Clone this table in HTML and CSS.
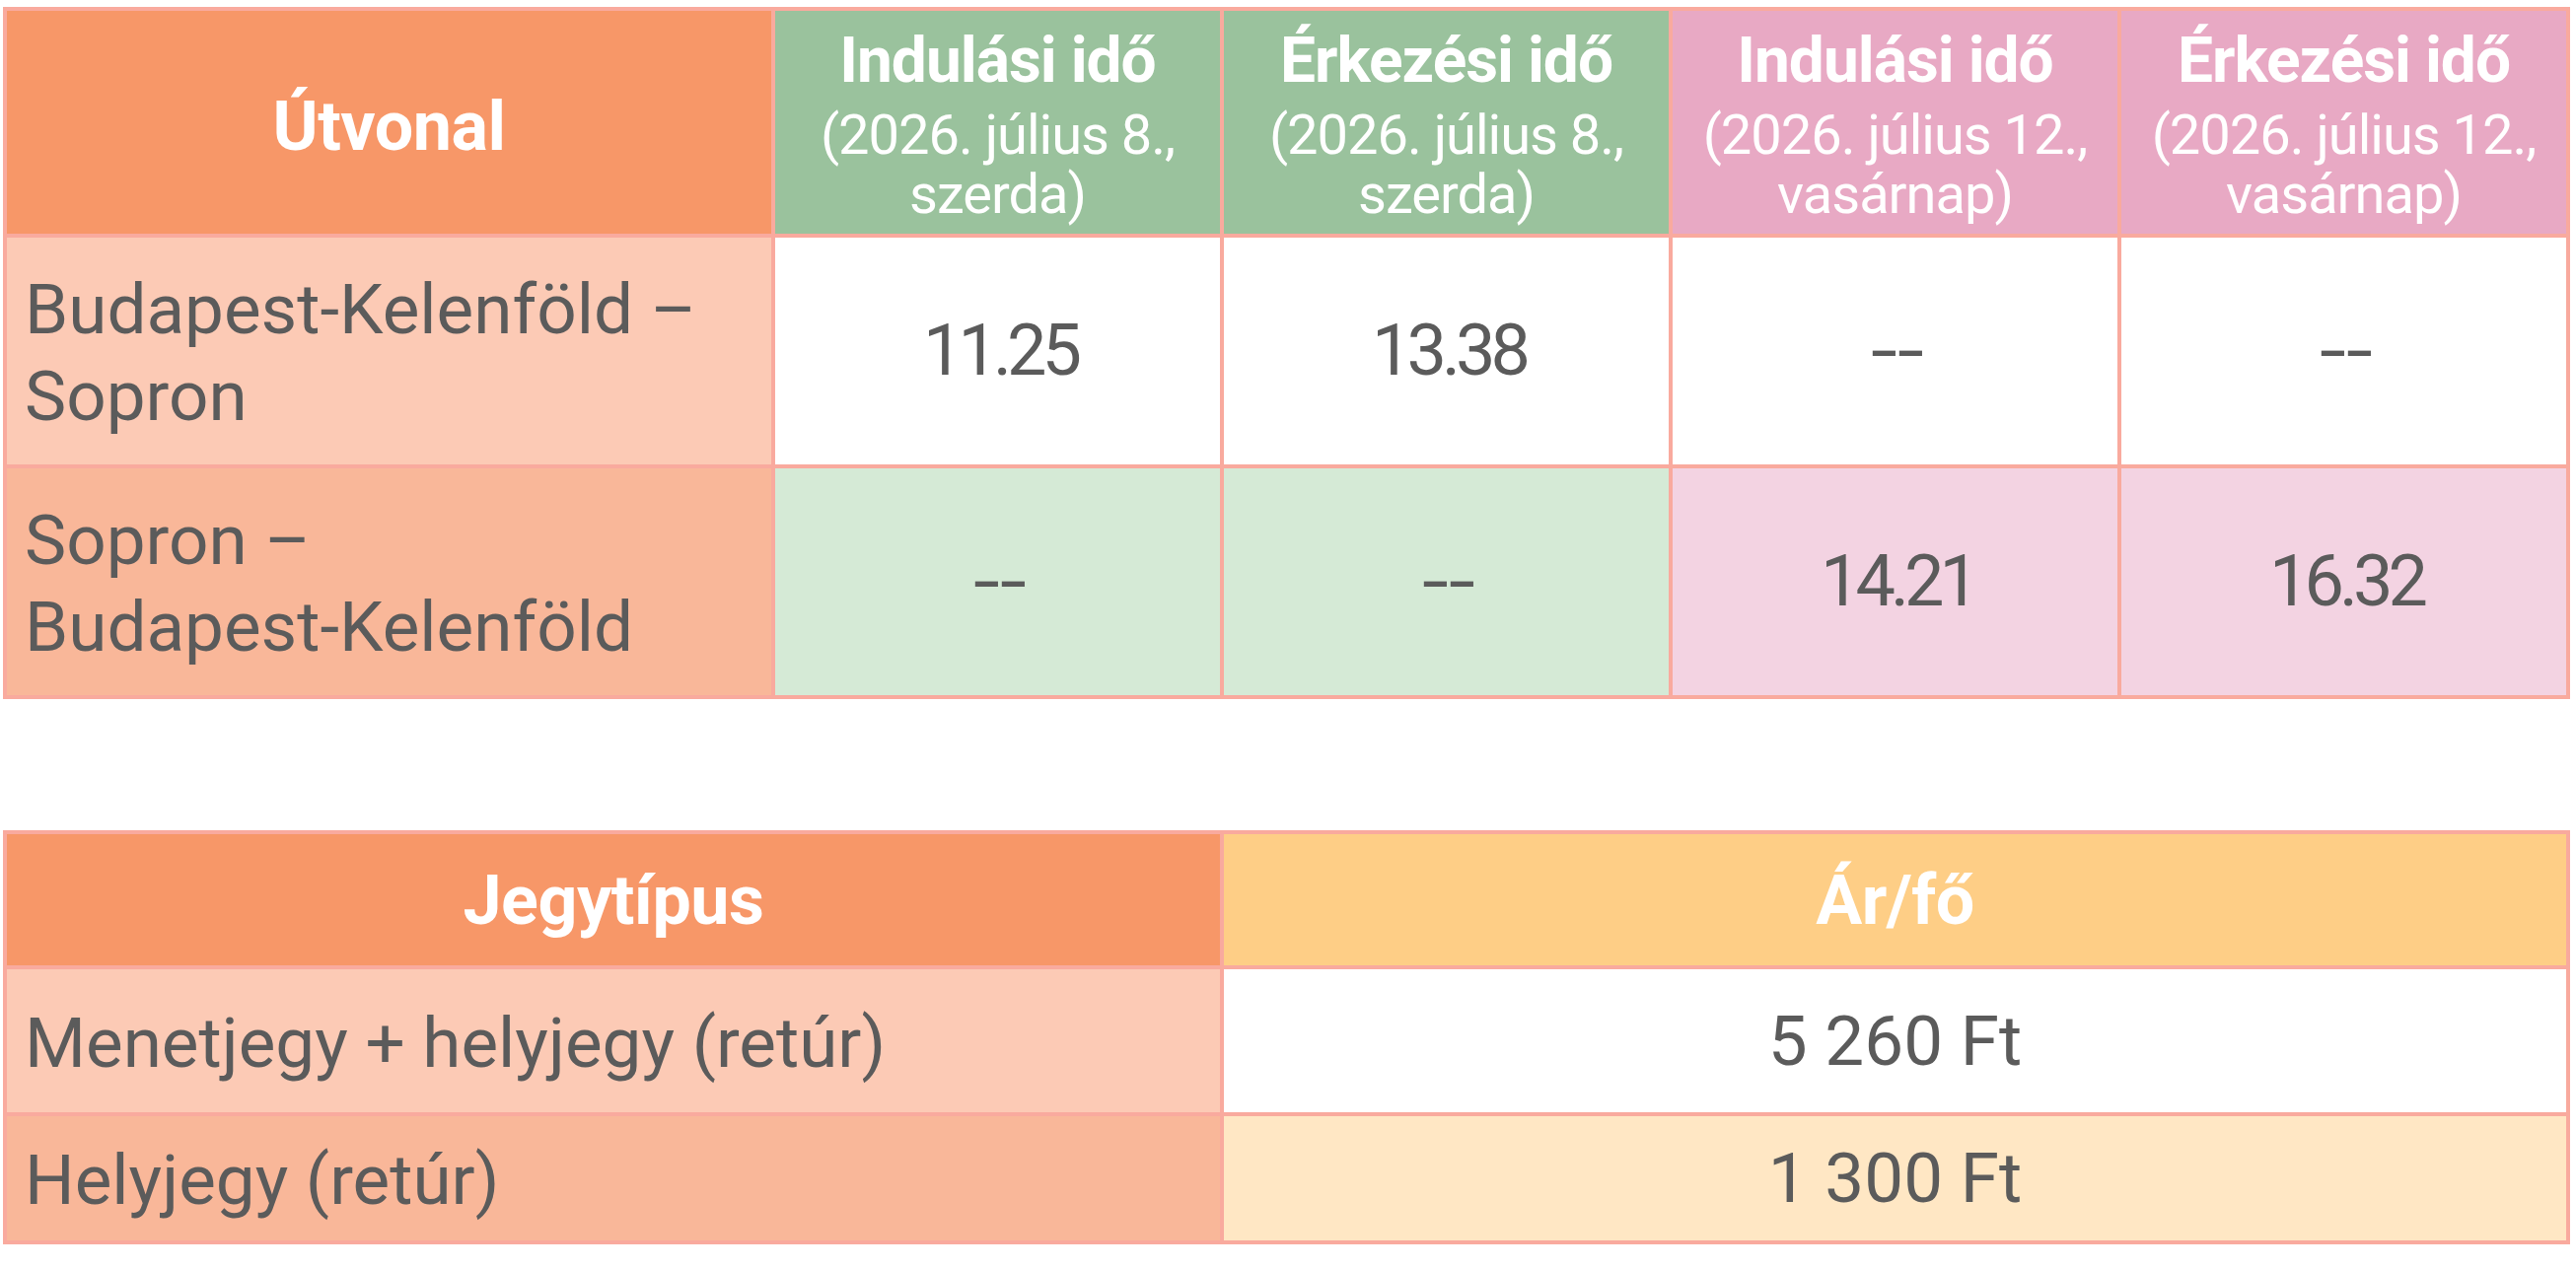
FILE: index.html
```html
<!DOCTYPE html>
<html lang="hu">
<head>
<meta charset="utf-8">
<title>Menetrend és jegyárak</title>
<link rel="stylesheet" href="styles.css">
</head>
<body>
<div class="page">
  <div class="grid sched">
    <div class="cell head big orange route-head">Útvonal</div>
    <div class="cell head green">
      <div class="head-inner"><span class="h-title">Indulási idő</span><span class="h-sub">(2026. július 8., szerda)</span></div>
    </div>
    <div class="cell head green">
      <div class="head-inner"><span class="h-title">Érkezési idő</span><span class="h-sub">(2026. július 8., szerda)</span></div>
    </div>
    <div class="cell head pink">
      <div class="head-inner"><span class="h-title">Indulási idő</span><span class="h-sub">(2026. július 12., vasárnap)</span></div>
    </div>
    <div class="cell head pink">
      <div class="head-inner"><span class="h-title">Érkezési idő</span><span class="h-sub">(2026. július 12., vasárnap)</span></div>
    </div>

    <div class="cell label peach"><div class="label-text">Budapest-Kelenföld – Sopron</div></div>
    <div class="cell time white">11.25</div>
    <div class="cell time white">13.38</div>
    <div class="cell time white"><span class="dash">--</span></div>
    <div class="cell time white"><span class="dash">--</span></div>

    <div class="cell label salmon"><div class="label-text">Sopron – <span class="nowrap">Budapest-Kelenföld</span></div></div>
    <div class="cell time lightgreen"><span class="dash">--</span></div>
    <div class="cell time lightgreen"><span class="dash">--</span></div>
    <div class="cell time lightpink">14.21</div>
    <div class="cell time lightpink">16.32</div>
  </div>

  <div class="grid prices">
    <div class="cell head big orange">Jegytípus</div>
    <div class="cell head big yellow">Ár/fő</div>

    <div class="cell label peach"><div class="label-text">Menetjegy + helyjegy (retúr)</div></div>
    <div class="cell price white">5 260 Ft</div>

    <div class="cell label salmon"><div class="label-text">Helyjegy (retúr)</div></div>
    <div class="cell price lightyellow">1 300 Ft</div>
  </div>
</div>
</body>
</html>
```

FILE: styles.css
```css
html, body {
  margin: 0;
  padding: 0;
  background: #ffffff;
}

body {
  font-family: Roboto, "Noto Sans", "Liberation Sans", sans-serif;
  color: #5b5b5b;
}

.page {
  display: flex;
  flex-direction: column;
  gap: 133px;
  padding: 7px 6px 0 3px;
}

.grid {
  display: grid;
  background: #f9aa9e;
  padding: 4px;
  gap: 4px;
}

.sched {
  grid-template-columns: 775px repeat(4, 1fr);
  grid-template-rows: 226px 230px 230px;
}

.prices {
  grid-template-columns: 1230px 1fr;
  grid-template-rows: 133px 145px 126px;
}

.cell {
  display: flex;
  align-items: center;
  justify-content: center;
  text-align: center;
  min-width: 0;
}

/* colours */
.orange { background: #f79768; }
.green { background: #9ac29d; }
.pink { background: #e8a9c4; }
.yellow { background: #fece86; }
.peach { background: #fccab5; }
.salmon { background: #f9b799; }
.white { background: #ffffff; }
.lightgreen { background: #d5ead6; }
.lightpink { background: #f3d3e2; }
.lightyellow { background: #ffe7c4; }

/* header cells */
.head {
  color: #ffffff;
  font-weight: 700;
  font-size: 64px;
  letter-spacing: -1px;
  line-height: 72px;
}

.head.big {
  font-size: 70px;
  letter-spacing: -0.5px;
}

.route-head {
  padding-top: 8px;
}

.head-inner {
  display: flex;
  flex-direction: column;
  align-items: center;
  padding: 0 10px 6px;
}

.h-title {
  display: block;
  line-height: 91px;
}

.h-sub {
  display: block;
  font-weight: 400;
  font-size: 56px;
  letter-spacing: -1px;
  line-height: 60px;
}

/* body cells */
.label {
  justify-content: flex-start;
  text-align: left;
  font-size: 71px;
  line-height: 88px;
  padding: 0 18px;
}

.label-text {
  display: block;
  padding-top: 4px;
}

.nowrap {
  white-space: nowrap;
}

.time {
  font-size: 72px;
  letter-spacing: -5px;
  line-height: 88px;
  padding-left: 5px;
}

.dash {
  display: inline-block;
  letter-spacing: 0;
  transform: scaleX(1.35);
}

.price {
  font-size: 71px;
  line-height: 88px;
}
```
